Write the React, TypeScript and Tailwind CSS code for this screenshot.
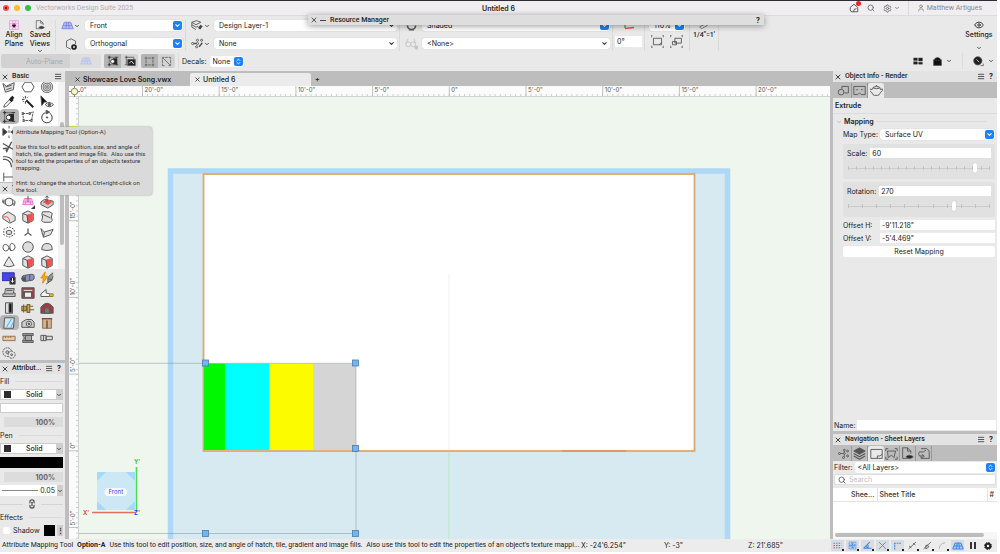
import type { ReactNode } from "react";
import { ChevronDown, ChevronsUpDown, Eye, Search, X, User, Link2, Settings as Gear } from "lucide-react";

const K = "#555";
const RED = "#f0524f";

function Ico({ children, className = "size-3.5" }: { children: ReactNode; className?: string }) {
  return (
    <svg viewBox="0 0 16 16" fill="none" stroke={K} strokeWidth="1.1" strokeLinejoin="round" className={"shrink-0 " + className}>
      {children}
    </svg>
  );
}

const attributeMap = (
  <>
    <path d="M3 3h10v10H3z" strokeWidth=".8" />
    <path d="M1 3h4M3 1v4M11 3h4M1 13h4M3 11v4M11 13h4" stroke="#333" />
    <path d="M8 5h5v7H8z" fill="#222" stroke="#222" />
    <circle cx="7.500" cy="8.500" r="2.600" fill="#fff" stroke="#333" />
  </>
);
const cubeRed = (
  <>
    <path d="M2 4l6-3 6 3v8l-6 3-6-3z" fill="#e2e2e2" />
    <path d="M7 6l6-2v7.500L8 14z" fill={RED} stroke={RED} />
    <path d="M2 4l5 2 1 9" />
  </>
);
const planeGrid = <path d="M4 4h8l3 8H1zM2.500 8h11M7 4l-1 8M9 4l1 8" />;

type Tool = { name: string; art: ReactNode; active?: boolean };

const basicTools: Tool[] = [
  { name: "Pan", art: <path d="M1 4l4 3 9-4-1 8-9 3zM4 8l7-2M5 11l6-2" fill="#ddd" /> },
  { name: "Polygon", art: <path d="M4.500 2.500h7l3.500 5.500-3.500 5.500h-7L1 8z" /> },
  { name: "Spiral", art: <g strokeWidth=".9"><circle cx="8" cy="8" r="6.500" fill="#e8e8e8" /><circle cx="8" cy="8" r="4.500" /><circle cx="8" cy="8" r="2.500" /><circle cx="8" cy="8" r=".7" /></g> },
  { name: "Eyedropper", art: <><path d="M2 14l1-3 6-6 2 2-6 6z" /><path d="M9 4l3 3M10 5l3-3" strokeWidth="3.500" stroke="#222" /></> },
  { name: "Select Similar", art: <><path d="M6 6l8 8" strokeWidth="2.200" stroke="#222" /><path d="M5 1v3M5 7v3M1 5h3M7 3l1-1M2 2l1 1M2 8l1-1" stroke="#333" /></> },
  { name: "Visibility", art: <><path d="M1 1l7 7H5l-3 4z" fill="#111" /><path d="M6 11q4-5 9.500 0-5 5-9.500 0z" fill="#fff" /><circle cx="10.700" cy="11" r="1.500" fill={K} /></> },
  { name: "Attribute Mapping", art: attributeMap, active: true },
  { name: "Reshape", art: <path d="M2 4h8l4-2-2 10H3zM1 3h2v2H1zM9 3h2v2H9zM2 11h2v2H2zM11 11h2v2h-2z" strokeDasharray="3 .8" /> },
  { name: "Rotate", art: <><path d="M6 3a6 6 0 1 0 5 .5" stroke="#333" /><path d="M7 0l4 2.500-4 2z" fill={K} /><circle cx="8" cy="8.500" r=".8" fill={K} /></> },
  { name: "Mirror", art: <><path d="M1 4l5 4-5 4zM15 4l-5 4 5 4z" fill="#333" /><path d="M8 1v3M8 6v3M8 12v3" /></> },
  { name: "Split", art: <path d="M1 12L14 3" /> },
  { name: "Shear", art: <path d="M3 14L13 2M8 14l5-6" /> },
  { name: "Trim", art: <path d="M1 4l14 8M5 14l6-12M1 10l7-1M4 12l3-2" strokeWidth="1.600" /> },
  { name: "Knife", art: <path d="M3 3l10 10" /> },
  { name: "Join", art: <path d="M3 13h10V4" /> },
  { name: "Fillet", art: <path d="M1 2h4q8 1 9 12M1 5h3q6 1 7 9" strokeWidth="1.400" /> },
  { name: "Chamfer", art: <path d="M2 3h7l4 4v6" /> },
  { name: "Offset", art: <path d="M3 13V5q0-2 3-2h7" /> },
  { name: "Dimension", art: <path d="M2 3v10M14 3v10M2 8h12" /> },
  { name: "Clip", art: <path d="M3 3h8v8H3z" /> },
  { name: "Extend", art: <path d="M2 8h12" /> },
];

const modelTools: Tool[] = [
  { name: "Flyover", art: <><ellipse cx="8" cy="8" rx="7" ry="3" /><circle cx="8" cy="8" r="4.500" fill="#f3f3f3" /><path d="M1 5v3h3M12 11l2 1 1-3" /></> },
  { name: "Working Plane", art: <><path d="M4 4h8l2 7H2zM2.500 8h11M6 4l-1 7M10 4l1 7" stroke="#e870d0" fill="#fbe0f6" /><path d="M8 1v7" /><path d="M16 12v4h-4z" fill="#111" /></> },
  { name: "Push Pull", art: <><path d="M1 8l4-3 10 2v4l-6 4-8-4z" fill="#ccc" /><path d="M4 8l4-3 5 3-4 3z" fill={RED} stroke={RED} /><path d="M8 8V1M6 3l2-2 2 2" /></> },
  { name: "Fillet Edge", art: <><path d="M1 6l6-4 8 5v5l-6 3-8-5z" fill="#e2e2e2" /><path d="M2 8q6-2 7 6" stroke={RED} /></> },
  { name: "Chamfer Edge", art: cubeRed },
  { name: "Shell", art: <path d="M3 2h8l3 2-1 4 1 4-2 2H4l-2-2 1-4-1-3zM3 5l9 4" fill="#e2e2e2" /> },
  { name: "Control Points", art: <><path d="M2 5l6-3 6 3v6l-6 3-6-3z" strokeDasharray="2 1.500" /><path d="M5 7l3-1 3 1v3l-3 1-3-1z" fill="#ddd" /></> },
  { name: "3D Locus", art: <path d="M8 4v5l-4 3M8 9l4 3" strokeWidth="1.400" /> },
  { name: "NURBS Surface", art: <path d="M1 4l4 4 10-3-3 6-8 3zM5 8l-1 6" fill="#e4e4e4" /> },
  { name: "Loft", art: <path d="M8 9q-1 4-4 3.500T1 8.500 4 5q3 0 4 4t4 3 3-4-3-4-3 4 2 4" /> },
  { name: "Sphere", art: <circle cx="8" cy="8" r="6" fill="#ddd" /> },
  { name: "Hemisphere", art: <path d="M2 11q0-7 6-7t6 7q-6 2-12 0z" fill="#ddd" /> },
  { name: "Cone", art: <path d="M8 2L2 12q6 3 12 0z" fill="#e9e9e9" /> },
  { name: "Taper Face", art: cubeRed },
  { name: "Extract", art: cubeRed },
];

const showTools: Tool[] = [
  { name: "Video Screen", art: <><path d="M0 2h14v9H0z" fill="#4646e6" stroke="#2b2bb0" /><path d="M9 7h6v8H9z" fill="#222" /><path d="M12 8v5M10.500 11l1.500 2 1.500-2" stroke="#fff" /></> },
  { name: "Lighting Device", art: <><path d="M1 8q0-3 3-3l6-1q5-1 5 2v3q-1 2-5 2l-6 1q-3 0-3-4z" fill="#8b91bd" /><path d="M5 5v7M10 4v7" /><circle cx="3" cy="9" r="2" fill="#4a5080" /></> },
  { name: "Power", art: <><path d="M6 1L1 8h3l-1 6 6-8H5z" fill="#f5b016" stroke="#e08a00" /><path d="M15 2q-5 3-6 6v5l4-2 2-5M11 12l-4 3M10 9l4 1" fill="#999" /></> },
  { name: "Stage Deck", art: <path d="M4 3h10l-1 5h2v4H1V9h2zM3 9h10M5 5h7" fill="#c6c6c6" /> },
  { name: "Curtain Stage", art: <><path d="M1 2h14v12H1z" fill="#97434b" /><path d="M4 7h8v6H4z" fill="#eee" /><path d="M3 5h10" stroke="#eee" /></> },
  { name: "Cable", art: <><path d="M1 9l6-5v4l4 1v3H1z" fill="#f3f3f3" /><path d="M11 9h4v3h-4z" fill="#f2c230" stroke="#9a7a20" /></> },
  { name: "Speaker", art: <><path d="M4 2h8v12H4z" fill="#ddd" /><path d="M8 3h3v10H8z" fill="#111" /></> },
  { name: "Hoist", art: <path d="M1 6h5v5H1zM7 4h3v9H7zM10 6h4M10 10h5M3 4v9" fill="#c9a95c" stroke="#7a6330" strokeWidth="1.300" /> },
  { name: "Barn", art: <><path d="M1 7q7-9 14 0v7H1z" fill="#9a3f45" /><path d="M5 14V9q3-3 6 0v5z" fill="#777" /></> },
  { name: "Mirror Surface", art: <><path d="M3 2h11l-1 12H2z" fill="#cde6f6" /><path d="M5 13l6-10M10 13l3-6" stroke="#5aa6d8" /></>, active: true },
  { name: "Camera", art: <><path d="M1 7l5-3h6l3 3v6H1z" fill="#ccc" /><circle cx="9" cy="9" r="3" fill="#eee" /><circle cx="9" cy="9" r="1" fill="#333" /></> },
  { name: "Drapery", art: <><path d="M3 3h10v11H3z" fill="#d3b294" stroke="#8a6a4c" /><path d="M8 5v9M2 3h12" stroke="#6d4f35" strokeWidth="1.600" /></> },
  { name: "Plank", art: <path d="M1 6h14v5H1zM4 6v2M7 6v2M10 6v2" fill="#e6c8a6" stroke="#94724e" /> },
  { name: "Truss", art: <path d="M2 3h12v2H2zM2 11h12v2H2zM5 5h7v6H5zM2 5l3 3-3 3" fill="#aaa" /> },
  { name: "Bolt", art: <path d="M1 5h6v6H1zM7 6h7v4H7zM4 5v6" fill="#ddd" /> },
  { name: "Gobo", art: <><circle cx="6" cy="7" r="5" fill="#e4e4e4" strokeDasharray="2 1" /><circle cx="11" cy="10" r="4" fill="#e4e4e4" strokeDasharray="2 1" /><circle cx="6" cy="7" r="1.500" /><circle cx="11" cy="10" r="1" /></> },
];

function ToolGrid({ tools }: { tools: Tool[] }) {
  return (
    <div className="grid w-[56px] grid-cols-3">
      {tools.map((t) => (
        <button key={t.name} aria-label={t.name} className={"flex h-[15px] items-center justify-center " + (t.active ? "rounded-sm bg-[#b5b5b5]" : "")}>
          <Ico>{t.art}</Ico>
        </button>
      ))}
    </div>
  );
}

function PaletteHeader({ title, help = false }: { title: string; help?: boolean }) {
  return (
    <div className="flex h-[11px] shrink-0 items-center gap-[3px] bg-[#e3e3e3] pr-[3px] pl-px">
      <button aria-label={"Close " + title}><X className="size-2" strokeWidth={2.5} /></button>
      <h2 className="min-w-0 flex-1 font-['Roboto'] font-medium whitespace-nowrap">{title}</h2>
      <button aria-label={title + " menu"}>
        <svg viewBox="0 0 8 8" className="size-[7px]" stroke="#444"><path d="M0 1.500h7M0 4h7M0 6.500h7" /></svg>
      </button>
      {help && <button className="w-1.5 font-bold">?</button>}
    </div>
  );
}

function Drop({ label, value, blue = false, className = "" }: { label: string; value: string; blue?: boolean; className?: string }) {
  return (
    <div className={"relative flex h-[11px] items-center rounded-[3px] bg-white shadow-[0_0_1px_#bbb] " + className}>
      <select aria-label={label} className="h-full w-full appearance-none bg-transparent pr-3 pl-[5px] outline-none">
        <option>{value}</option>
      </select>
      <span className={"pointer-events-none absolute right-px flex size-[9px] items-center justify-center rounded-[2px] " + (blue ? "bg-[#1a82fb] text-white" : "text-[#333]")}>
        <ChevronDown className="size-[7px]" strokeWidth={3.5} />
      </span>
    </div>
  );
}

function Stepper({ id, value, className = "" }: { id: string; value: string; className?: string }) {
  return (
    <div className={"relative flex h-[11px] items-center rounded-[3px] bg-white " + className}>
      <select id={id} className="h-full w-full appearance-none bg-transparent pr-2.5 pl-[3px] outline-none">
        <option>{value}</option>
      </select>
      <span className="pointer-events-none absolute right-px flex size-[9px] items-center justify-center rounded-[2px] bg-[#1a82fb] text-white">
        <ChevronsUpDown className="size-[7px]" strokeWidth={3} />
      </span>
    </div>
  );
}

const Rule = () => <span className="w-px self-stretch bg-[#dadada]" />;
const Caret = () => <ChevronDown className="size-[6px] shrink-0" strokeWidth={3} />;

function TitleBar() {
  return (
    <header className="flex h-4 shrink-0 items-center border-t border-b border-t-[#2e2c36] border-b-[#dcdcdc] bg-[#f0eef0] pl-[3px]">
      <div className="flex flex-1 items-center gap-[5px] pr-3">
        <button aria-label="Close window" className="flex size-[6px] items-center justify-center rounded-full bg-[#f4504d]"><span className="size-0.5 rounded-full bg-[#6b0d0b]" /></button>
        <button aria-label="Minimize window" className="size-[6px] rounded-full bg-[#f8bc2e]" />
        <button aria-label="Zoom window" className="size-[6px] rounded-full bg-[#2ac33f]" />
        <span className="font-['Roboto'] text-[#b0aeb0]">Vectorworks Design Suite 2025</span>
      </div>
      <h1 className="font-semibold">Untitled 6</h1>
      <div className="flex flex-1 items-center justify-end gap-2 self-stretch pr-[15px] text-[#666]">
        <button aria-label="Notifications" className="relative">
          <Ico className="size-[10px]"><path d="M2 7l6-5 6 5v7H5q-3 0-3-3zM7 14q0-5 5-5" strokeWidth="1.500" /></Ico>
          <span className="absolute -top-0.5 -right-0.5 size-[5px] rounded-full bg-[#ef2225]" />
        </button>
        <button aria-label="Search"><Search className="size-2" strokeWidth={2.5} /></button>
        <button aria-label="Preferences" className="flex items-center gap-0.5"><Gear className="size-[9px]" strokeWidth={2.2} /><Caret /></button>
        <Rule />
        <button className="flex items-center gap-0.5 font-['Roboto'] text-[#8a888a]"><User className="size-2" strokeWidth={2.5} />Matthew Artigues</button>
      </div>
    </header>
  );
}

function ResourceManager() {
  return (
    <section className="absolute top-[15px] left-[308px] z-20 flex h-[10px] w-[456px] items-center gap-[2px] bg-[#dedede] px-0.5 shadow-[0_1px_6px_rgba(0,0,0,.4)]">
      <button aria-label="Close Resource Manager"><X className="size-2" strokeWidth={2.2} /></button>
      <span className="h-px w-[6px] bg-[#444]" />
      <h2 className="flex-1 pl-0.5 font-['Roboto'] font-medium">Resource Manager</h2>
      <button className="w-2 font-bold">?</button>
    </section>
  );
}

function Toolbar() {
  return (
    <div className="flex h-[37px] shrink-0 items-stretch gap-[2px] pt-1 pb-[2px] pl-[3px]">
      <button className="flex w-[22px] flex-col items-center font-medium">
        <Ico className="size-[10px]"><path d="M1 1h14v14H1zM6 1v14M1 6h14M10 1v14M1 10h14" stroke="#e78fdc" fill="#fbe4f8" /><path d="M8 5v6M5 8l3 4 3-4z" fill="#222" stroke="#222" /></Ico>
        <span className="leading-[9px]">Align<br />Plane</span>
      </button>
      <button className="flex w-[26px] flex-col items-center font-medium">
        <Ico className="size-[10px]"><path d="M9 14H2V1h7l4 4v3M9 1v4h4" /><path d="M6 12q4-4 9 0-4 4-9 0z" fill="#333" /></Ico>
        <span className="leading-[9px]">Saved<br />Views</span>
        <Caret />
      </button>
      <Rule />
      <div className="grid grid-cols-[auto_98px] grid-rows-2 items-center gap-x-[5px] gap-y-[7px] pb-[2px] pl-[3px]">
        <button aria-label="Plane" className="flex items-center"><Ico className="size-[13px]"><g stroke="#7a86ef" fill="#b4bcf7">{planeGrid}</g></Ico><Caret /></button>
        <Drop label="View" value="Front" blue />
        <span className="flex justify-center"><Ico className="size-3"><path d="M8 15l-6-3V4l6-3 6 3v4" /><circle cx="12" cy="12" r="2.500" strokeWidth="2.500" stroke="#222" /></Ico></span>
        <Drop label="Projection" value="Orthogonal" blue />
      </div>
      <Rule />
      <div className="grid grid-cols-[auto_183px] grid-rows-2 items-center gap-x-1 gap-y-[7px] pb-[2px] pl-[3px]">
        <button aria-label="Layers" className="flex items-center"><Ico className="size-[13px]"><path d="M1 4l6-2 5 2-6 3zM1 4v3l5 3 3-1M1 7v3l5 3" /><path d="M10 12l3-4" strokeWidth="3.500" stroke="#444" /></Ico><Caret /></button>
        <Drop label="Active layer" value="Design Layer-1" />
        <button aria-label="Classes" className="flex items-center"><Ico className="size-[13px]"><path d="M3 8h4M10 12l4-5" strokeWidth="1.800" /><circle cx="2" cy="8" r="1.300" /><circle cx="8" cy="4" r="1.300" /><circle cx="13" cy="4" r="1.300" /><circle cx="7" cy="12" r="1.300" /><circle cx="8" cy="8" r="1.300" /></Ico><Caret /></button>
        <Drop label="Active class" value="None" />
      </div>
      <Rule />
      <div className="grid grid-cols-[auto_188px] grid-rows-2 items-center gap-x-1 gap-y-[7px] pb-[2px] pl-[3px]">
        <Ico className="size-[13px]"><path d="M3 8a5 5 0 0 0 10 0M5 13h6" strokeWidth="2" /></Ico>
        <Drop label="Render mode" value="Shaded" blue />
        <Ico className="size-[13px]"><g stroke="#c4c4c4"><circle cx="4" cy="9" r="3" /><circle cx="10" cy="9" r="3" /><path d="M1 8l3-6M13 8l-2-6" /><circle cx="14" cy="13" r="2" fill="#c4c4c4" /></g></Ico>
        <Drop label="Saved render style" value="<None>" />
      </div>
      <Rule />
      <div className="flex w-[27px] flex-col items-center gap-[6px]">
        <svg viewBox="0 0 14 10" className="h-[10px] w-[14px]" fill="none" strokeWidth="1.500"><path d="M3 0v8" stroke="#2ec05a" /><path d="M3 8.500l9-1" stroke="#e75555" /></svg>
        <input aria-label="Rotation angle" defaultValue="0°" className="h-[11px] w-full bg-white pl-0.5 outline-none" />
      </div>
      <Rule />
      <div className="flex w-[40px] flex-col items-center gap-[4px]">
        <div className="w-9"><Drop label="Zoom" value="116%" blue /></div>
        <div className="flex gap-[6px]">
          <button aria-label="Fit to page"><Ico className="size-[13px]"><path d="M3 4h10v8H3z" /><path d="M0 3V1h2M14 1h2v2M0 13v2h2M14 15h2v-2M10 12l3-3" /></Ico></button>
          <button aria-label="Fit to objects"><Ico className="size-[13px]"><path d="M6 4h8v6H6zM3 8h5v4H3z" /><path d="M0 3V1h2M14 1h2v2M0 13v2h2M14 15h2v-2" /></Ico></button>
        </div>
      </div>
      <Rule />
      <button className="flex w-[24px] flex-col items-center">
        <Ico className="size-[10px]"><path d="M1 11l12-6v4L4 14z" /></Ico>
        <span className="pt-px font-['Roboto'] leading-[9px] font-medium">1/4"=1'</span>
      </button>
      <Rule />
      <button className="ml-auto flex w-[36px] flex-col items-center font-medium">
        <Eye className="size-[10px]" strokeWidth={2} />
        <span className="leading-[9px]">Settings</span>
        <span className="mt-auto"><Caret /></span>
      </button>
    </div>
  );
}

function ModeBar() {
  return (
    <div className="flex h-[18px] shrink-0 items-center gap-[3px] pb-[2px] pl-px">
      <div className="flex h-[14px] overflow-hidden rounded-[2px] text-[#a9a9a9]">
        <button className="flex w-[69px] items-center gap-1.5 bg-[#d2d2d2] pl-3"><span className="size-[7px] border border-[#e6c8de]" />Auto-Plane</button>
        <button aria-label="Plane mode" className="flex w-[31px] items-center justify-center bg-[#dedede]"><Ico className="size-3"><g stroke="#b9c1ea" fill="#d0d5f0">{planeGrid}</g></Ico></button>
      </div>
      <div className="flex h-[14px] overflow-hidden rounded-[2px] bg-[#d3d3d3]">
        <button aria-label="Repeat" className="flex w-[17px] items-center justify-center bg-[#b4b4b4]"><Ico className="size-3">{attributeMap}</Ico></button>
        <button aria-label="Single" className="flex w-[17px] items-center justify-center"><Ico className="size-3"><path d="M1 3h4M3 1v12M3 3h10v3M1 13h4" /><path d="M5 6h10v8H5z" fill="#222" /><path d="M7 11l3-3 3 4" stroke="#fff" /></Ico></button>
      </div>
      <div className="flex h-[14px] overflow-hidden rounded-[2px] bg-[#d3d3d3]">
        <button aria-label="Symmetric" className="flex w-[17px] items-center justify-center bg-[#b4b4b4]"><Ico className="size-[11px]"><path d="M3 1v14M1 3h14M13 1v14M1 13h14" strokeDasharray="4 1" /></Ico></button>
        <button aria-label="Asymmetric" className="flex w-[17px] items-center justify-center"><Ico className="size-[11px]"><path d="M2 5V2h3M11 2h3v3M2 11v3h3M14 11v3h-3M3 3l10 10M6 2h4M2 6v4M14 6v4" /></Ico></button>
      </div>
      <Rule />
      <label htmlFor="decals">Decals:</label>
      <Stepper id="decals" value="None" className="w-[34px]" />
      <div className="ml-auto flex items-center gap-2.5 self-stretch pr-[3px]">
        <button aria-label="Panes"><Ico className="size-[10px]"><path d="M1 3h6v4H1zM9 3h6v5H9zM1 9h6v4H1zM9 10h6v3H9z" fill="#222" stroke="#222" strokeWidth=".5" /></Ico></button>
        <button aria-label="Clip cube" className="flex items-center gap-1"><Ico className="size-[9px]"><path d="M1 5q2 0 3-3 4-2 8 0 1 3 3 3v10H1z" fill="#111" /><path d="M5 6h1M10 6h1" stroke="#eee" /></Ico><Caret /></button>
        <Rule />
        <button aria-label="Render options" className="flex items-center gap-1"><Ico className="size-[11px]"><circle cx="7" cy="7" r="6" fill="#222" /><path d="M5 5l4 4" stroke="#eee" /><path d="M11 14h4v-3" /></Ico><Caret /></button>
      </div>
    </div>
  );
}

function FillRow({ label }: { label: string }) {
  return (
    <div className="relative flex h-[11px] items-center border border-[#ccc] bg-white">
      <span className="absolute left-[3px] size-[7px] bg-[#2d2d2d]" />
      <select aria-label={label} className="w-full appearance-none bg-transparent pl-[25px] font-medium outline-none"><option>Solid</option></select>
      <span className="pointer-events-none absolute right-0 flex h-full items-center bg-[#cfcfcf]"><Caret /></span>
    </div>
  );
}

function SectionLabel({ children }: { children: ReactNode }) {
  return <h3 className="flex h-[10px] items-center gap-1.5 after:h-px after:flex-1 after:bg-[#dcdcdc]">{children}</h3>;
}

function Opacity() {
  return <div className="mt-px ml-1 flex h-[10px] items-center justify-end bg-[#dcdcdc] pr-2 font-bold text-[#666]">100%</div>;
}

function Attributes() {
  return (
    <section className="flex min-h-0 flex-1 flex-col border-t-[3px] border-[#bdbdbd] bg-[#e9e9e9]">
      <PaletteHeader title="Attribut..." help />
      <div className="flex flex-col gap-[3px] py-0.5 pr-0.5">
        <SectionLabel>Fill</SectionLabel>
        <FillRow label="Fill style" />
        <button aria-label="Fill colour" className="h-[10px] border border-[#ccc] bg-white" />
        <Opacity />
        <SectionLabel>Pen</SectionLabel>
        <FillRow label="Pen style" />
        <button aria-label="Pen colour" className="h-[11px] bg-black" />
        <Opacity />
        <button className="flex h-[11px] items-center gap-0.5 bg-white pl-0.5">
          <span className="h-px flex-1 bg-[#888]" />0.05
          <span className="flex h-full items-center bg-[#cfcfcf]"><Caret /></span>
        </button>
        <div className="flex h-[10px] items-center justify-center gap-1 text-[#555]">
          <span className="h-px flex-1 bg-[#d5d5d5]" />
          <button aria-label="Link line ends"><Link2 className="size-2.5 rotate-90" strokeWidth={3} /></button>
          <span className="h-px flex-1 bg-[#d5d5d5]" />
        </div>
        <SectionLabel>Effects</SectionLabel>
        <div className="flex items-center">
          <label className="flex flex-1 items-center gap-[3px] pl-[3px]">
            <input type="checkbox" className="size-[7px] appearance-none rounded-[2px] bg-white" />Shadow
          </label>
          <button aria-label="Shadow colour" className="size-[11px] bg-black" />
          <button aria-label="Shadow options" className="ml-0.5 h-[11px] w-[6px] bg-[#cfcfcf] leading-none font-bold">⋮</button>
        </div>
      </div>
    </section>
  );
}

function LeftPalettes() {
  return (
    <aside className="flex w-[69px] shrink-0 flex-col border-r-4 border-[#bdbdbd]">
      <PaletteHeader title="Basic" />
      <div className="flex h-[100px] shrink-0 justify-between overflow-hidden bg-white">
        <div className="-mt-[3px]"><ToolGrid tools={basicTools} /></div>
        <div className="w-[7px] bg-[#f3f3f3] pt-10 pl-0.5"><span className="block h-12 w-1 rounded-full bg-[#bdbdbd]" /></div>
      </div>
      <div className="border-t border-[#bdbdbd]"><PaletteHeader title="T" /></div>
      <div className="flex shrink-0 justify-between bg-white">
        <ToolGrid tools={modelTools} />
        <div className="w-[7px] bg-[#f3f3f3] pl-0.5"><span className="block h-[51px] w-1 rounded-full bg-[#bdbdbd]" /></div>
      </div>
      <div className="shrink-0 bg-[#e6e6e6] pt-px"><ToolGrid tools={showTools} /></div>
      <Attributes />
    </aside>
  );
}

function Tip() {
  return (
    <div role="tooltip" className="absolute top-[127px] left-[13px] z-10 w-[139px] rounded-[3px] bg-[#dadada] pt-px pb-0.5 pl-[3px] font-['Roboto'] text-[6px] leading-[7px] text-[#333] shadow-[0_0_2px_#888]">
      <p>Attribute Mapping Tool (Option-A)</p>
      <p className="mt-2">Use this tool to edit position, size, and angle of<br />hatch, tile, gradient and image fills.&nbsp; Also use this<br />tool to edit the properties of an object's texture<br />mapping.</p>
      <p className="mt-2">Hint: to change the shortcut, Ctrl+right-click on<br />the tool.</p>
    </div>
  );
}

const STEP = 76.7;
const hMarks = ["20'-0\"", "15'-0\"", "10'-0\"", "5'-0\"", "0\"", "5'-0\"", "10'-0\"", "15'-0\"", "20'-0\""];
const vMarks = ["20'-0\"", "15'-0\"", "10'-0\"", "5'-0\"", "0\"", "5'-0\""];

function TopRuler() {
  return (
    <svg className="h-[11px] w-full shrink-0 border-b border-[#cfd3cf] bg-[#fafbfa]" fontSize="6" fill="#555" stroke="none">
      <text x="11" y="6">0"</text>
      {Array.from({ length: 400 }, (_, i) => <path key={i} d={`M${12 + i * 5.113} 8v3`} stroke="#bbb" strokeWidth=".7" />)}
      {hMarks.map((m, i) => (
        <g key={i}>
          <path d={`M${73.5 + i * STEP} 0v11`} stroke="#aaa" strokeWidth=".7" />
          <text x={75.5 + i * STEP} y="6">{m}</text>
        </g>
      ))}
    </svg>
  );
}

function SideRuler() {
  return (
    <svg className="h-full w-[10px] shrink-0 border-r border-[#cfd3cf] bg-[#fafbfa]" fontSize="6" fill="#555">
      <path d="M0 29h10v2H0z" fill="#efe84a" />
      {Array.from({ length: 200 }, (_, i) => <path key={i} d={`M7 ${1.5 + i * 5.113}h3`} stroke="#bbb" strokeWidth=".7" />)}
      {vMarks.map((m, i) => (
        <g key={i}>
          <path d={`M0 ${47 + i * STEP}h10`} stroke="#aaa" strokeWidth=".7" />
          {i > 0 && <text transform={`translate(6 ${45 + i * STEP}) rotate(-90)`}>{m}</text>}
        </g>
      ))}
    </svg>
  );
}

const handles = [[205.5, 363], [355.5, 363], [355.5, 448.5], [205.5, 533.5], [355.5, 533.5]];

function Canvas() {
  return (
    <svg viewBox="79 97 751 442" preserveAspectRatio="xMinYMin slice" className="h-full min-w-0 flex-1 bg-[#eef6ee]" fontSize="6">
      <path d="M170.500 545V171h557v374" fill="#d8eaf1" stroke="#afd7f6" strokeWidth="5.500" />
      <rect x="203.500" y="174" width="491" height="277" fill="#fff" stroke="#dfa96e" strokeWidth="1.800" />
      <path d="M449 274v176" stroke="#f0f0f0" />
      <path d="M449 452v90" stroke="#b9ecc9" strokeWidth="1.200" />
      <path d="M562 451h64" stroke="#ea8a66" strokeWidth="1.500" />
      <path d="M204 363.500h21.500v86.500h-21.500z" fill="#00f900" />
      <path d="M225.500 363.500h44v86.500h-44z" fill="#0ff" />
      <path d="M269.500 363.500H313v86.500h-43.500z" fill="#fdfb00" />
      <path d="M313 363.500h43v86.500h-43z" fill="#d5d5d5" />
      <path d="M79 363.300h277v170.200H79" fill="none" stroke="#7f9090" strokeOpacity=".6" strokeWidth=".8" />
      {handles.map(([x, y]) => <rect key={`${x}-${y}`} x={x - 3} y={y - 3} width="6" height="6" fill="#6fb5f8" stroke="#4e7ca6" strokeWidth=".8" />)}
      <path d="M97 472h38v38H97z" fill="#a5d8fb" />
      <path d="M106 472h20l9 9v20l-9 9h-20l-9-9v-20z" fill="#cbe8f4" />
      <rect x="104.500" y="488" width="22.500" height="8" rx="4" fill="#f6fbff" />
      <text x="115.800" y="494" textAnchor="middle" fill="#3a3af0">Front</text>
      <path d="M92 512.500h44" stroke="#e06f5c" strokeWidth="1.600" />
      <path d="M136.500 467v45" stroke="#4fd85a" strokeWidth="1.600" />
      <text x="134" y="464" fill="#20c030" fontWeight="600">Y'</text>
      <text x="83" y="515" fill="#e03a28" fontWeight="600">X'</text>
      <text x="134" y="515" fill="#3a3ae0" fontWeight="600">Z'</text>
    </svg>
  );
}

function Document() {
  return (
    <main className="flex min-w-0 flex-1 flex-col">
      <nav className="flex h-[15px] shrink-0 items-end bg-[#bdbdbd] font-semibold">
        <button className="flex h-[13px] w-[121px] items-center gap-[2px] pl-[5px] whitespace-nowrap"><X className="size-[7px]" strokeWidth={2.5} />Showcase Love Song.vwx</button>
        <button className="flex h-[13px] w-[121px] items-center gap-[2px] rounded-t-[2px] bg-[#ebebeb] pl-[4px] font-medium"><X className="size-[7px]" strokeWidth={2.5} />Untitled 6</button>
        <button aria-label="New tab" className="h-[13px] pl-1">+</button>
      </nav>
      <div className="relative">
        <TopRuler />
        <svg viewBox="0 0 12 12" className="absolute top-0 left-0 size-[11px]" stroke="#777" fill="#fbf9c0"><path d="M6 0v12M0 6h12" /><circle cx="6" cy="6" r="3.500" /></svg>
      </div>
      <div className="-mt-[6px] flex min-h-0 flex-1 pt-[6px]">
        <SideRuler />
        <Canvas />
      </div>
    </main>
  );
}

const teapot = <path d="M4 4q4-2 8 0l1 3 2-1 .5 2-3 3q-1 3-3 3h-4q-2 0-3-3l-3-3 1-2 2 1zM4 5q4 1.500 8 0M7 3l1-1.500L9 3" />;

function IconTabs({ items, active }: { items: { name: string; art: ReactNode }[]; active: number }) {
  return (
    <div className="flex h-4 shrink-0 items-end bg-[#bdbdbd] pl-[3px]">
      {items.map((t, i) => (
        <button key={t.name} aria-label={t.name} className={"flex h-[15px] w-4 items-center justify-center " + (i === active ? "rounded-t-[3px] bg-[#e9e9e9]" : "border-r border-[#999]")}>
          <Ico className="size-[13px]">{t.art}</Ico>
        </button>
      ))}
    </div>
  );
}

function SliderGroup({ id, label, value, pos, ticks }: { id: string; label: string; value: string; pos: number; ticks: number }) {
  return (
    <div className="flex h-[35px] flex-col justify-between rounded-[2px] bg-[#e1e1e1] p-1">
      <div className="flex items-center gap-[3px]">
        <label htmlFor={id}>{label}</label>
        <input id={id} defaultValue={value} className="h-[10px] min-w-0 flex-1 bg-white pl-0.5 outline-none" />
      </div>
      <div className="relative flex h-[14px] items-center">
        <div className="absolute inset-x-px top-[5px] flex h-1 justify-between bg-[linear-gradient(#ccc,#ccc)] bg-[length:100%_1px] bg-center bg-no-repeat">
          {Array.from({ length: ticks }, (_, i) => <span key={i} className="w-px bg-[#c2c2c2]" />)}
        </div>
        <input type="range" aria-label={label + " slider"} defaultValue={pos} className="relative h-[10px] w-full appearance-none bg-transparent [&::-webkit-slider-thumb]:h-[10px] [&::-webkit-slider-thumb]:w-1 [&::-webkit-slider-thumb]:appearance-none [&::-webkit-slider-thumb]:rounded-[2px] [&::-webkit-slider-thumb]:bg-white [&::-webkit-slider-thumb]:shadow-[0_0_1px_#aaa]" />
      </div>
    </div>
  );
}

function Field({ id, label, value }: { id: string; label: string; value: string }) {
  return (
    <div className="flex items-center">
      <label htmlFor={id} className="w-[37px]">{label}</label>
      <input id={id} defaultValue={value} className="h-[10px] min-w-0 flex-1 bg-white pl-0.5 outline-none" />
    </div>
  );
}

function ObjectInfo() {
  return (
    <section className="flex min-h-0 flex-1 flex-col">
      <PaletteHeader title="Object Info - Render" help />
      <IconTabs active={2} items={[
        { name: "Shape", art: <><circle cx="5" cy="10" r="3.500" /><path d="M6 6V3h8v8H9" /></> },
        { name: "Data", art: <path d="M1 3h14v10h-5l-2-2-2 2H1zM4 7h2M10 7h2" /> },
        { name: "Render", art: teapot },
      ]} />
      <h3 className="border-b border-[#dcdcdc] py-[3px] pl-0.5 leading-[9px] font-semibold">Extrude</h3>
      <div className="flex flex-col gap-[3px] pt-[3px] pr-0.5 pl-[10px]">
        <h4 className="-ml-[7px] flex h-[9px] items-center gap-[2px] pr-2 font-semibold after:h-px after:flex-1 after:bg-[#dcdcdc]"><span className="text-[#aaa]"><Caret /></span>Mapping</h4>
        <div className="flex items-center pb-px">
          <span className="w-[37px] whitespace-nowrap">Map Type:</span>
          <Drop label="Map Type" value="Surface UV" blue className="flex-1" />
        </div>
        <SliderGroup id="scale" label="Scale:" value="60" pos={90} ticks={18} />
        <SliderGroup id="rotation" label="Rotation:" value="270" pos={75} ticks={11} />
        <div className="flex flex-col gap-[3px]">
          <Field id="oh" label="Offset H:" value={"-9'11.218\""} />
          <Field id="ov" label="Offset V:" value={"-5'4.469\""} />
          <button className="h-[11px] rounded-[2px] bg-white leading-[11px]">Reset Mapping</button>
        </div>
      </div>
      <div className="mt-auto flex items-center gap-0.5 px-px pb-px">
        <label htmlFor="objname">Name:</label>
        <input id="objname" className="h-[10px] min-w-0 flex-1 bg-white outline-none" />
      </div>
    </section>
  );
}

function Navigation() {
  return (
    <section className="flex shrink-0 flex-col border-t-[3px] border-[#bdbdbd]">
      <PaletteHeader title="Navigation - Sheet Layers" help />
      <IconTabs active={2} items={[
        { name: "Classes", art: <><path d="M4 8h4M9 5v1M9 10v2" /><circle cx="3" cy="8" r="1.200" /><circle cx="9" cy="4" r="1.200" /><circle cx="9" cy="8" r="1.200" /><circle cx="8" cy="13" r="1.200" /><circle cx="13" cy="5" r="1.200" /><circle cx="13" cy="11" r="1.200" /></> },
        { name: "Design Layers", art: <><path d="M8 1l7 4-7 4-7-4z" fill="#555" /><path d="M1 8l7 4 7-4M1 11l7 4 7-4" strokeWidth="1.500" /></> },
        { name: "Sheet Layers", art: <path d="M1 3h14v11H1zM9 14v-3h3l3-2" /> },
        { name: "Viewports", art: <path d="M1 5V2h3M12 2h3v3M1 12v3h3M15 12v3h-3M3 5h10l-2 8-3-3-4 3z" /> },
        { name: "Saved Views", art: <><path d="M9 14H2V1h6l4 4v3M8 1v4h4" /><path d="M6 12q4-4 9 0-4 4-9 0z" fill="#222" /></> },
        { name: "References", art: <path d="M5 2h7l3 3v9H5v-3M8 6H3q-2 2 0 5h5M6 9l3 2-3 3M8 6l3-2" /> },
      ]} />
      <div className="flex h-[13px] items-center gap-[2px] px-px">
        <label htmlFor="filter">Filter:</label>
        <Stepper id="filter" value="<All Layers>" className="flex-1" />
      </div>
      <div className="mx-px flex h-[11px] items-center gap-[3px] rounded-[2px] border border-[#ddd] bg-white pl-[3px]">
        <Search className="size-2 text-[#555]" strokeWidth={2.5} />
        <input aria-label="Search sheet layers" placeholder="Search" className="min-w-0 flex-1 outline-none placeholder:text-[#c0c0c0]" />
      </div>
      <div className="mt-[3px] h-[44px] bg-white">
        <table className="w-full table-fixed text-left text-[#333]">
          <thead>
            <tr className="h-[13px] border-b border-[#e4e4e4] [&>th]:font-medium">
              <th className="w-[14px]" />
              <th className="w-[30px] pl-1">Shee...</th>
              <th className="border-l border-[#e4e4e4] pl-0.5">Sheet Title</th>
              <th className="w-[10px] border-l border-[#e4e4e4] pl-0.5">#</th>
            </tr>
          </thead>
        </table>
      </div>
      <div className="h-[7px] bg-[#f6f6f6] pt-px pl-0.5"><span className="block h-1 w-[149px] rounded-full bg-[#bdbdbd]" /></div>
    </section>
  );
}

const snaps: { name: string; art: ReactNode; on: boolean }[] = [
  { name: "Grid", on: true, art: <path d="M1 4h14M1 8h14M1 12h14" strokeDasharray="2.500 2" strokeWidth="2.200" /> },
  { name: "Object", on: true, art: <path d="M2 2h12v12H2zM5 5h6v6H5zM2 8h12M8 2v12" strokeDasharray="2 1" strokeWidth="1.600" /> },
  { name: "Angle", on: true, art: <path d="M1 13h14M1 13L12 2M9 5v8M5 9l4 4" strokeWidth="1.800" /> },
  { name: "Intersection", on: true, art: <path d="M2 2l12 12M14 2L2 14" strokeWidth="1.500" /> },
  { name: "Smart Points", on: true, art: <path d="M2 4h13M3 3v12" strokeDasharray="3 1.500" strokeWidth="2" /> },
  { name: "Distance", on: false, art: <path d="M1 14L14 2M2 9l4 3M9 4l4 3" strokeWidth="1.500" /> },
  { name: "Tangent", on: false, art: <path d="M1 14L14 2M5 8q4-3 5 3l-5 3z" strokeWidth="1.500" /> },
  { name: "Edge", on: false, art: <path d="M2 14Q3 4 13 3" stroke="#aaa" strokeWidth="1.500" /> },
];

function StatusBar() {
  return (
    <footer className="flex h-[13px] shrink-0 items-center bg-[#ececec] pl-0.5">
      <span className="font-['Roboto'] whitespace-nowrap">Attribute Mapping Tool</span>
      <span className="pl-1 font-['Roboto'] font-bold whitespace-nowrap">Option-A</span>
      <span className="min-w-0 flex-1 pl-1 font-['Roboto'] whitespace-nowrap">Use this tool to edit position, size, and angle of hatch, tile, gradient and image fills.&nbsp; Also use this tool to edit the properties of an object's texture mappi...</span>
      <span className="w-[83px]">X: -24'6.254"</span>
      <span className="w-[84px]">Y: -3"</span>
      <span className="w-[83px]">Z: 21'.685"</span>
      <div className="flex w-[166px] items-center gap-0.5">
        {snaps.map((s) => (
          <button key={s.name} aria-label={s.name} className={"relative flex h-[11px] w-[13px] items-center justify-center " + (s.on ? "bg-[#d9dce0]" : "")}>
            <svg viewBox="0 0 16 16" className="size-[9px]" fill="none" stroke={s.on ? "#3b86ee" : "#555"}>{s.art}</svg>
            <span className="absolute right-0 bottom-0 size-0.5 bg-[#222]" />
          </button>
        ))}
        <button aria-label="Plane snap" className="flex h-[11px] w-[13px] items-center justify-center bg-[#d9dce0]"><svg viewBox="0 0 16 16" className="size-3" fill="#a9cbf8" stroke="#3b86ee" strokeWidth="1.300">{planeGrid}</svg></button>
        <button aria-label="Pause" className="flex w-[13px] justify-center gap-0.5"><span className="h-[7px] w-0.5 bg-[#333]" /><span className="h-[7px] w-0.5 bg-[#333]" /></button>
        <button aria-label="Snap settings" className="flex w-[13px] justify-center">
          <svg viewBox="0 0 16 16" className="size-2"><circle cx="8" cy="8" r="4.500" fill="none" stroke="#222" strokeWidth="4" /><circle cx="8" cy="8" r="7" fill="none" stroke="#222" strokeWidth="2" strokeDasharray="3 2.500" /></svg>
        </button>
      </div>
    </footer>
  );
}

export default function App() {
  return (
    <div className="relative flex h-screen flex-col overflow-hidden bg-white pr-[3px] pb-0.5 font-['Inter','Liberation_Sans',sans-serif] text-[7px] leading-[9px] text-[#222] select-none">
      <TitleBar />
      <div className="flex shrink-0 flex-col bg-[#e9e9e9]">
        <Toolbar />
        <ModeBar />
      </div>
      <div className="flex min-h-0 flex-1 bg-[#e9e9e9]">
        <LeftPalettes />
        <Document />
        <aside className="flex w-[167px] shrink-0 flex-col border-l-[3px] border-[#bdbdbd]">
          <ObjectInfo />
          <Navigation />
        </aside>
      </div>
      <StatusBar />
      <ResourceManager />
      <Tip />
    </div>
  );
}
